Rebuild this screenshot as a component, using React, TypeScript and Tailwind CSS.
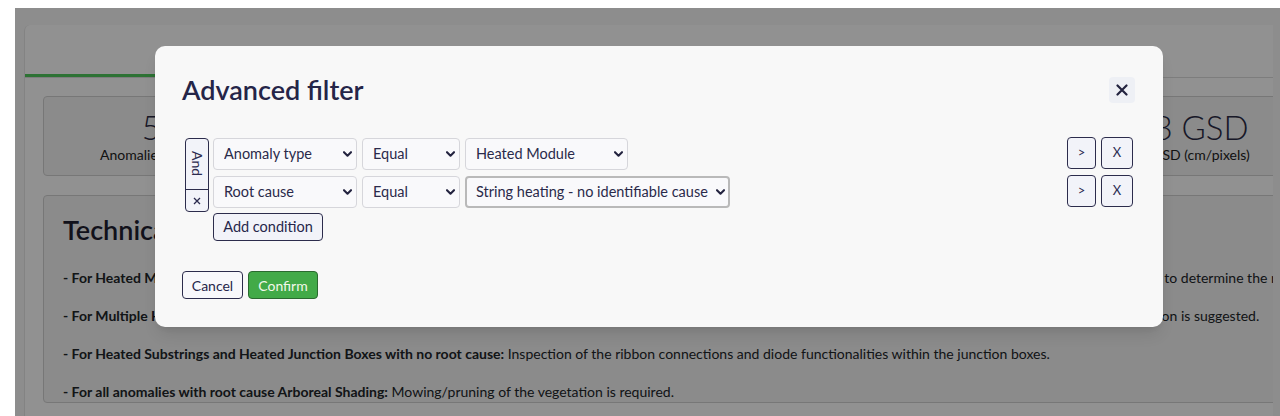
import { useState } from "react";

type Condition = {
  field: string;
  operator: string;
  value: string;
  valueWidth: string;
  focused?: boolean;
};

const fieldOptions = ["Anomaly type", "Root cause", "Severity", "Module ID"];
const operatorOptions = ["Equal", "Not equal"];
const valueOptions = [
  "Heated Module",
  "String heating - no identifiable cause",
  "Heated Substring",
  "Heated Junction Box",
  "Arboreal Shading",
];

const stats = [
  { value: "52", label: "Anomalies detected" },
  { value: "4,312", label: "Inspected modules" },
  { value: "1.21%", label: "Affected modules" },
  { value: "3.4 MWp", label: "Inspected power" },
  { value: "3 GSD", label: "GSD (cm/pixels)" },
];

function Chevron() {
  return (
    <svg
      className="pointer-events-none absolute right-[5px] top-1/2 -translate-y-1/2"
      width="9"
      height="6"
      viewBox="0 0 9 6"
      fill="none"
    >
      <path d="M1 1.2 L4.5 4.7 L8 1.2" stroke="#23233f" strokeWidth="2.1" strokeLinecap="round" strokeLinejoin="round" />
    </svg>
  );
}

function FilterSelect({
  value,
  options,
  width,
  focused,
}: {
  value: string;
  options: string[];
  width: string;
  focused?: boolean;
}) {
  return (
    <div className={`relative h-8 ${width}`}>
      <select
        defaultValue={value}
        className={`h-full w-full appearance-none rounded-[4px] bg-[#f9f9fb] pr-[14px] text-[14.5px] text-[#2a2a4a] outline-none ${
          focused ? "border-2 border-[#b9b9b9] pl-[9px]" : "border border-[#d6d6db] pl-[10px]"
        }`}
      >
        {options.map((o) => (
          <option key={o} value={o}>
            {o}
          </option>
        ))}
      </select>
      <Chevron />
    </div>
  );
}

function SmallButton({ children, width }: { children: React.ReactNode; width: string }) {
  return (
    <button
      className={`flex h-8 ${width} items-center justify-center rounded-[4px] border border-[#2c2c4c] bg-[#f2f3f9] text-[13px] text-[#2c2c52]`}
    >
      {children}
    </button>
  );
}

export default function App() {
  const [conditions] = useState<Condition[]>([
    { field: "Anomaly type", operator: "Equal", value: "Heated Module", valueWidth: "w-[163px]" },
    {
      field: "Root cause",
      operator: "Equal",
      value: "String heating - no identifiable cause",
      valueWidth: "w-[265px]",
      focused: true,
    },
  ]);

  return (
    <div className="h-[416px] overflow-hidden bg-white font-['Lato',sans-serif] text-[#212529]">
      <div className="relative ml-[15px] mt-[8px] h-[408px] overflow-hidden bg-[#f8f8f8]">
        {/* page behind the modal */}
        <div className="ml-[9px] mt-[17px] h-[400px] w-[1249px] overflow-hidden rounded-tl-md border-l border-[#e6e6e6] bg-white">
          {/* Tabs */}
          <div className="flex border-b border-[#dcdcdc] text-[15px]">
            <div className="flex h-[52px] w-[412px] items-start justify-center border-b-[3px] border-[#50c95c] pt-[16px] text-[#2e9e3c]">
              Dashboard
            </div>
            <div className="flex h-[52px] w-[340px] items-start justify-center pt-[16px] text-[#333]">Map</div>
            <div className="flex h-[52px] w-[386px] items-start justify-center pt-[16px] text-[#333]">Anomalies</div>
          </div>

          <div className="px-[18px] pt-[18px]">
            {/* Stats */}
            <div className="grid w-[1276px] grid-cols-[repeat(5,236px)] gap-x-[24px]">
              {stats.map((s) => (
                <div
                  key={s.label}
                  className="flex h-[80px] flex-col items-center justify-center rounded-[4px] border border-[#d2d2d2] bg-[#f4f4f4]"
                >
                  <div className="text-[33px] font-light leading-[38px] text-[#2b2b45]">{s.value}</div>
                  <div className="text-[14px] leading-[18px] text-[#222]">{s.label}</div>
                </div>
              ))}
            </div>

            {/* Technical recommendations */}
            <div className="mt-[19px] w-[1300px] rounded-[4px] border border-[#d2d2d2] bg-[#f4f4f4] pl-[19px] pt-[17px] text-[14px]">
              <h2 className="text-[27px] font-semibold leading-[34px] text-[#1e1e30]">Technical recommendations</h2>
              <div className="mt-[21px] space-y-[18px] whitespace-nowrap leading-[20px]">
                <p>
                  <b>- For Heated Modules with no root cause:</b> An in-depth on-site inspection of all the affected modules with an I-V curve tracer, and electroluminescence imaging is necessary in order to determine the root cause.
                </p>
                <p>
                  <b>- For Multiple Heated Modules and Heated Strings:</b> A check of the string fuses and of the string cabling up to the combiner box, together with a broad electroluminescence inspection is suggested.
                </p>
                <p>
                  <b>- For Heated Substrings and Heated Junction Boxes with no root cause:</b> Inspection of the ribbon connections and diode functionalities within the junction boxes.
                </p>
                <p>
                  <b>- For all anomalies with root cause Arboreal Shading:</b> Mowing/pruning of the vegetation is required.
                </p>
              </div>
            </div>
          </div>
        </div>

        {/* overlay + modal */}
        <div className="absolute inset-0 bg-black/[0.43]">
          <div className="ml-[140px] mt-[38px] h-[281px] w-[1008px] rounded-[10px] bg-[#f8f8f8] pt-[31px] text-[#26264a] shadow-lg">
            <div className="flex h-[26px] items-center justify-between pl-[27px] pr-[28px]">
              <h1 className="text-[27px] font-semibold leading-[26px] text-[#252548]">Advanced filter</h1>
              <button className="flex h-[26px] w-[26px] items-center justify-center rounded-[4px] bg-[#eef0f5]">
                <svg width="12" height="12" viewBox="0 0 12 12" fill="none">
                  <path d="M1.5 1.5 L10.5 10.5 M10.5 1.5 L1.5 10.5" stroke="#23233f" strokeWidth="2.2" strokeLinecap="round" />
                </svg>
              </button>
            </div>

            <div className="mt-[34px] flex justify-between pl-[30px] pr-[30px]">
              <div className="mt-[1px] flex items-start gap-[4px]">
                {/* And / remove group */}
                <div className="flex h-[74px] w-[24px] flex-col overflow-hidden rounded-[4px] border border-[#2c2c4c] bg-[#f2f3f9]">
                  <div className="flex h-[51px] items-center justify-center border-b border-[#2c2c4c]">
                    <span className="text-[14px] leading-none text-[#2a2a4e] [writing-mode:vertical-rl]">And</span>
                  </div>
                  <div className="flex flex-1 items-center justify-center">
                    <svg width="8" height="8" viewBox="0 0 8 8" fill="none">
                      <path d="M1 1 L7 7 M7 1 L1 7" stroke="#2a2a4e" strokeWidth="1.3" />
                    </svg>
                  </div>
                </div>

                <div className="flex flex-col">
                  <div className="flex flex-col gap-[6px]">
                    {conditions.map((c) => (
                      <div key={c.field} className="flex gap-[5px]">
                        <FilterSelect value={c.field} options={fieldOptions} width="w-[144px]" />
                        <FilterSelect value={c.operator} options={operatorOptions} width="w-[98px]" />
                        <FilterSelect value={c.value} options={valueOptions} width={c.valueWidth} focused={c.focused} />
                      </div>
                    ))}
                  </div>
                  <button className="mt-[5px] h-[28px] w-[110px] rounded-[4px] border border-[#2c2c4c] bg-[#f2f3f9] text-[14.5px] text-[#26264a]">
                    Add condition
                  </button>
                </div>
              </div>

              <div className="flex flex-col gap-[6px]">
                {conditions.map((c) => (
                  <div key={c.field} className="flex gap-[5px]">
                    <SmallButton width="w-[29px]">&gt;</SmallButton>
                    <SmallButton width="w-[32px]">X</SmallButton>
                  </div>
                ))}
              </div>
            </div>

            <div className="mt-[30px] flex gap-[5px] pl-[27px]">
              <button className="h-[28px] w-[61px] rounded-[4px] border border-[#2c2c4c] bg-[#f8f8fb] text-[14px] text-[#26264a]">
                Cancel
              </button>
              <button className="h-[28px] w-[70px] rounded-[4px] border border-[#2a6a2f] bg-[#42aa48] text-[14px] text-[#f3f8ea]">
                Confirm
              </button>
            </div>
          </div>
        </div>
      </div>
    </div>
  );
}
